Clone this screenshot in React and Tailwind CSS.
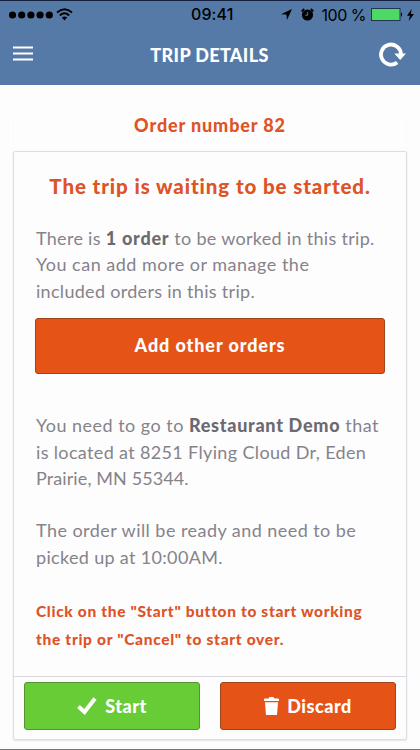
import React from 'react';

function StatusBar() {
  return (
    <div className="relative flex h-[27px] items-center justify-between pl-[9px] pr-[6px] text-black">
      <div className="flex items-center">
        <svg width="45" height="8" viewBox="0 0 45 8" fill="currentColor">
          <circle cx="3.5" cy="4" r="3.6" />
          <circle cx="12.7" cy="4" r="3.6" />
          <circle cx="21.9" cy="4" r="3.6" />
          <circle cx="31.1" cy="4" r="3.6" />
          <circle cx="40.3" cy="4" r="3.6" />
        </svg>
        <svg className="ml-[2px]" width="17" height="13" viewBox="0 0 17 13" fill="none" stroke="currentColor" strokeWidth="2">
          <path d="M1 4.6 Q8.5 -2 16 4.6" />
          <path d="M3.8 7.4 Q8.5 3.2 13.2 7.4" />
          <path d="M8.5 12.4 L5.8 9.6 Q8.5 7.4 11.2 9.6 Z" fill="currentColor" stroke="none" />
        </svg>
      </div>
      <span className="absolute left-[191px] top-px font-[Inter,sans-serif] text-[16px] leading-6 font-medium tracking-[0.1px]">09:41</span>
      <div className="flex items-center">
        <svg width="11" height="11" viewBox="0 0 11 11" fill="currentColor">
          <path d="M11 0 L6 11 L5.4 5.6 L0 5.2 Z" />
        </svg>
        <svg className="ml-[9px]" width="13" height="13" viewBox="0 0 13 13">
          <circle cx="6.5" cy="7" r="5.6" fill="currentColor" />
          <path d="M.6 3.4 L3.2 1 M12.4 3.4 L9.8 1" stroke="currentColor" strokeWidth="1.8" />
          <path d="M6.7 4 V7.2 H4.2" fill="none" stroke="#557aa8" strokeWidth="1" />
        </svg>
        <span className="ml-[8px] font-[Inter,sans-serif] text-[16px] leading-6 tracking-[-0.5px] whitespace-nowrap">100 %</span>
        <svg className="ml-[5px]" width="33" height="13" viewBox="0 0 33 13">
          <rect x=".5" y=".5" width="28.5" height="12" fill="#4cd964" stroke="#233650" />
          <path d="M30 4 Q32.2 6.5 30 9 Z" fill="#000" />
        </svg>
        <svg className="ml-[3px]" width="7" height="12" viewBox="0 0 7 12" fill="currentColor">
          <path d="M4.6 0 L0 6.8 H2.9 L1.7 12 L7 4.9 H4 Z" />
        </svg>
      </div>
    </div>
  );
}

function Header() {
  return (
    <header className="h-[85px] border-t border-[#15203f] bg-[#557aa8]">
      <StatusBar />
      <div className="flex h-[52px] items-center justify-between pl-[13px] pr-[14px]">
        <svg width="20" height="16" viewBox="0 0 20 16" stroke="#fff" strokeWidth="1.9">
          <path d="M0 1.5 H20 M0 7.5 H20 M0 13.5 H20" />
        </svg>
        <h1 className="ml-[7px] pt-[2px] text-[18px] font-black tracking-[0.35px] text-white">TRIP DETAILS</h1>
        <svg width="27" height="25" viewBox="0 0 27 25">
          <path d="M18.2 20.4 A10 10 0 1 1 22 12" fill="none" stroke="#fff" strokeWidth="3.8" />
          <path d="M15.3 11.5 H27 L21.2 18 Z" fill="#fff" />
        </svg>
      </div>
    </header>
  );
}

function App() {
  return (
    <div className="flex h-[750px] w-[420px] flex-col overflow-hidden border-b border-[#77757a] bg-[#fefdfe] font-[Lato,sans-serif]">
      <Header />
      <main className="mx-[13px] flex flex-col whitespace-nowrap">
        <h2 className="mt-[30px] h-[36px] border-x border-[#fbf9fc] text-center text-[18px] leading-[20px] font-black tracking-[0.87px] text-[#dd5426]">
          <span>Order number 82</span>
        </h2>
        <section className="h-[589px] rounded-[2px] border border-[#dedbe3] shadow-[0_1px_2px_#e4e2e8]">
          <div className="h-[525px] border-b border-[#dad7e0] px-[22px] pt-[20px]">
            <h3 className="-mx-1 text-center text-[20.5px] leading-[28px] font-black tracking-[0.9px] text-[#dd5426]">
              <span>The trip is waiting to be started.</span>
            </h3>
            <p className="mt-[25px] text-[18px] leading-[26.4px] text-[#85838a]">
              <span className="tracking-[0.3px]">There is <b className="font-black tracking-[0.75px] text-[#6c6a70]">1 order</b> to be worked in this trip.</span><br />
              <span className="tracking-[0.5px]">You can add more or manage the</span><br />
              <span className="tracking-[0.3px]">included orders in this trip.</span>
            </p>
            <button className="mt-[14px] -ml-px block h-[56px] w-[350px] rounded-[3px] border border-[#9c451f] bg-[#e65317] pb-[2px] text-[18px] font-black tracking-[0.9px] text-white">
              <span>Add other orders</span>
            </button>
            <p className="mt-[38px] text-[18px] leading-[26.4px] text-[#85838a]">
              <span className="tracking-[0.48px]">You need to go to <b className="font-black tracking-[0.7px] text-[#6c6a70]">Restaurant Demo</b> that</span><br />
              <span className="tracking-[0.35px]">is located at 8251 Flying Cloud Dr, Eden</span><br />
              <span className="tracking-[0.1px]">Prairie, MN 55344.</span>
            </p>
            <p className="mt-[26px] text-[18px] leading-[26.4px] text-[#85838a]">
              <span className="tracking-[0.45px]">The order will be ready and need to be</span><br />
              <span className="tracking-[0.33px]">picked up at 10:00AM.</span>
            </p>
            <p className="mt-[28px] text-[15.5px] leading-[27.5px] font-black text-[#dd5426]">
              <span className="tracking-[0.66px]">Click on the "Start" button to start working</span><br />
              <span className="tracking-[0.68px]">the trip or "Cancel" to start over.</span>
            </p>
          </div>
          <div className="flex gap-[20px] pl-[10px] pt-[5px] text-[18px] font-black tracking-[0.5px] text-white">
            <button className="flex h-[48px] w-[176px] items-center justify-center gap-[8px] rounded-[3px] border border-[#55942f] bg-[#68cc36]">
              <svg width="20" height="18" viewBox="0 0 20 18" fill="none" stroke="#fff" strokeWidth="4">
                <path d="M1.5 9.5 L7.5 15 L18 1.5" />
              </svg>
              <span>Start</span>
            </button>
            <button className="flex h-[48px] w-[176px] items-center justify-center gap-[8px] rounded-[3px] border border-[#9c451f] bg-[#e65317]">
              <svg width="15" height="18" viewBox="0 0 15 18" fill="#fff">
                <path d="M0 2 Q0 1.5 1 1.5 H4.5 L5.5 0 H9.5 L10.5 1.5 H14 Q15 1.5 15 2 V4 H0 Z" />
                <path d="M1 5.3 H14 L13 18 H2 Z" />
              </svg>
              <span>Discard</span>
            </button>
          </div>
        </section>
      </main>
    </div>
  );
}

export default App;
